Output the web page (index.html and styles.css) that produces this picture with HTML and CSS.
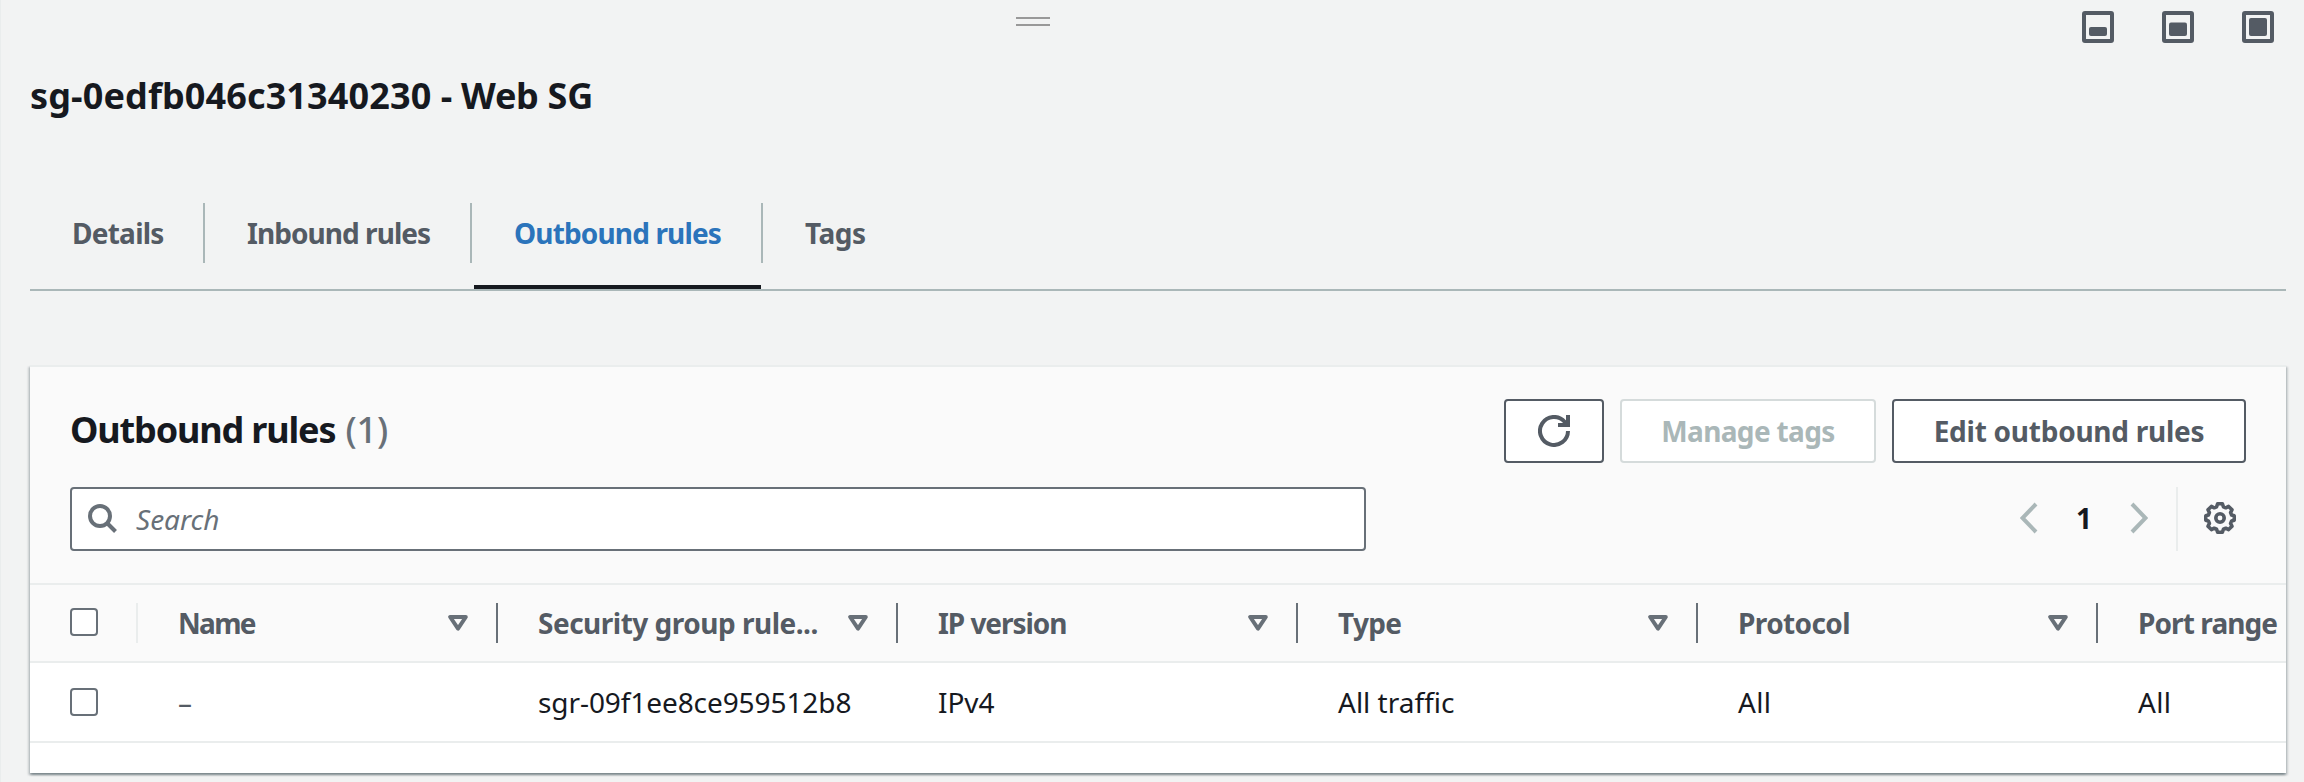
FILE: index.html
```html
<!DOCTYPE html>
<html lang="en">
<head>
<meta charset="utf-8">
<title>Security group</title>
<link rel="stylesheet" href="styles.css">
</head>
<body>
<div class="panel">
  <div class="topbar">
    <div class="handle"></div>
    <div class="sizes">
      <svg width="32" height="32" viewBox="0 0 32 32"><rect class="frame" x="2" y="2" width="28" height="28" rx="1"/><rect class="fill" x="7" y="16" width="18" height="9" rx="2"/></svg>
      <svg width="32" height="32" viewBox="0 0 32 32"><rect class="frame" x="2" y="2" width="28" height="28" rx="1"/><rect class="fill" x="7" y="11.5" width="18" height="13.5" rx="2"/></svg>
      <svg width="32" height="32" viewBox="0 0 32 32"><rect class="frame" x="2" y="2" width="28" height="28" rx="1"/><rect class="fill" x="7" y="7" width="18" height="18" rx="2"/></svg>
    </div>
  </div>
  <h1 class="title">sg-0edfb046c31340230 <span class="name">- Web SG</span></h1>
  <nav class="tabs">
    <a class="tab t-details"><span>Details</span></a>
    <a class="tab t-inbound"><span>Inbound rules</span></a>
    <a class="tab t-outbound active"><span>Outbound rules</span></a>
    <a class="tab t-tags"><span>Tags</span></a>
  </nav>
  <section class="card">
    <header class="card-head">
      <div class="row">
        <h2 class="card-title">Outbound rules <span class="count">(1)</span></h2>
        <div class="actions">
          <button class="btn refresh"><svg width="32" height="32" viewBox="0 0 32 32"><path d="M30 16A14 14 0 1 1 26.6 6.8L29.5 10M30 0V10H20"/></svg></button>
          <button class="btn manage" disabled>Manage tags</button>
          <button class="btn edit">Edit outbound rules</button>
        </div>
      </div>
      <div class="row">
        <div class="search">
          <svg width="32" height="32" viewBox="0 0 32 32"><circle cx="13" cy="13" r="10"/><path d="M20 20l8.5 8.5"/></svg>
          <span>Search</span>
        </div>
        <div class="pager">
          <svg class="chev" width="18" height="32" viewBox="0 0 18 32"><path d="M16 2L2.5 16 16 30"/></svg>
          <span class="page">1</span>
          <svg class="chev" width="18" height="32" viewBox="0 0 18 32"><path d="M2 2l13.5 14L2 30"/></svg>
          <i class="rule"></i>
          <svg class="gear" width="32" height="32" viewBox="0 0 32 32"><path d="M13.6 1.8h4.8l1 3 2.4 1 2.8-1.4 3.4 3.4-1.4 2.8 1 2.4 2.6.8v4.4l-2.6.8-1 2.4 1.4 2.8-3.4 3.4-2.8-1.4-2.4 1-1 3h-4.8l-1-3-2.4-1-2.8 1.4L4 24.2l1.4-2.8-1-2.4-2.6-.8v-4.4l2.6-.8 1-2.4L4 7.8l3.4-3.4 2.8 1.4 2.4-1z"/><circle cx="16" cy="16" r="4.2"/></svg>
        </div>
      </div>
    </header>
    <div class="grid head">
      <div class="cell check"><i class="box"></i></div>
      <div class="cell"><span class="n-name">Name</span><svg class="sort" width="20" height="16" viewBox="0 0 20 16"><path d="M2.2 2h15.6L10 13.6z"/></svg></div>
      <div class="cell"><span class="n-sgr">Security group rule...</span><svg class="sort" width="20" height="16" viewBox="0 0 20 16"><path d="M2.2 2h15.6L10 13.6z"/></svg></div>
      <div class="cell"><span class="n-ip">IP version</span><svg class="sort" width="20" height="16" viewBox="0 0 20 16"><path d="M2.2 2h15.6L10 13.6z"/></svg></div>
      <div class="cell"><span class="n-type">Type</span><svg class="sort" width="20" height="16" viewBox="0 0 20 16"><path d="M2.2 2h15.6L10 13.6z"/></svg></div>
      <div class="cell"><span class="n-proto">Protocol</span><svg class="sort" width="20" height="16" viewBox="0 0 20 16"><path d="M2.2 2h15.6L10 13.6z"/></svg></div>
      <div class="cell last"><span class="n-port">Port range</span></div>
    </div>
    <div class="grid body">
      <div class="cell check"><i class="box"></i></div>
      <div class="cell dash">–</div>
      <div class="cell id">sgr-09f1ee8ce959512b8</div>
      <div class="cell id">IPv4</div>
      <div class="cell">All traffic</div>
      <div class="cell all">All</div>
      <div class="cell all">All</div>
    </div>
  </section>
</div>
</body>
</html>
```
FILE: styles.css
```css
* { box-sizing: border-box; }
html, body { margin: 0; height: 782px; overflow: hidden; }
body { background: #f2f3f3; color: #16191f; font: 400 28px/40px "Noto Sans", "Open Sans", sans-serif; }
svg { display: block; fill: none; flex: none; }
.panel { height: 782px; border-left: 1px solid #eaeded; padding: 0 18px 0 29px; }

.topbar { height: 44px; padding-top: 11px; display: grid; grid-template-columns: 986px 34px 1fr; }
.handle { grid-column: 2; margin-top: 6px; height: 9px; border: solid #999; border-width: 2px 0; }
.sizes { display: flex; justify-content: flex-end; gap: 48px; padding-right: 12px; }
.frame { stroke: #545b64; stroke-width: 4; }
.fill { fill: #545b64; }

.title { margin: 32px 0 0; height: 127px; font-size: 36px; line-height: 40px; letter-spacing: .12px; }
.name { letter-spacing: -.3px; }

.tabs { display: flex; height: 88px; border-bottom: 2px solid #aab7b8; }
.tab { position: relative; height: 60px; border-right: 2px solid #aab7b8; padding: 10px 0 0 42px; font-weight: 700; color: #545b64; white-space: nowrap; }
.t-details { width: 175px; letter-spacing: -.75px; }
.t-inbound { width: 267px; letter-spacing: -.95px; }
.t-outbound { width: 291px; letter-spacing: -.85px; }
.t-tags { border: 0; letter-spacing: -.5px; }
.active { color: #2b74bb; }
.active::after { content: ""; position: absolute; left: 2px; right: 0; top: 82px; height: 4px; background: #16191f; }

.card { margin-top: 74px; height: 408px; background: #fff; border-top: 2px solid #eaeded; box-shadow: 0 2px 2px rgba(0,28,36,.3), 2px 2px 2px rgba(0,28,36,.15), -2px 2px 2px rgba(0,28,36,.15); }
.card-head { height: 218px; padding: 32px 40px; background: #fafafa; border-bottom: 2px solid #eaeded; display: grid; grid-template-rows: 64px 64px; row-gap: 24px; }
.row { display: flex; justify-content: space-between; align-items: center; }
.card-title { margin: -2px 0 0; font-size: 36px; line-height: 44px; letter-spacing: -1.15px; white-space: nowrap; }
.count { margin-left: 2px; font-weight: 500; color: #687078; letter-spacing: -.2px; }
.actions { display: flex; gap: 16px; }
.btn { height: 64px; border: 2px solid #545b64; border-radius: 4px; background: #fff; color: #545b64; font: 700 28px/40px "Noto Sans", "Open Sans", sans-serif; padding: 0 0 1px; white-space: nowrap; }
.refresh { width: 100px; padding: 0 0 0 32px; }
.refresh svg { stroke: #545b64; stroke-width: 4; }
.manage { width: 256px; letter-spacing: -.65px; color: #aab7b8; border-color: #d5dbdb; }
.edit { width: 354px; letter-spacing: -.25px; }

.search { width: 1296px; height: 64px; display: flex; align-items: center; gap: 17px; padding-left: 15px; background: #fff; border: 2px solid #687078; border-radius: 4px; font-style: italic; color: #687078; }
.search svg { stroke: #687078; stroke-width: 4; }
.pager { display: flex; align-items: center; padding: 0 10px 2px 0; height: 64px; }
.chev { stroke: #aab7b8; stroke-width: 4; }
.page { width: 92px; text-align: center; font-weight: 700; }
.rule { width: 2px; height: 64px; background: #eaeded; margin: 0 26px 0 28px; transform: translateY(1px); }
.gear { stroke: #545b64; stroke-width: 3.6; stroke-linejoin: round; }

.grid { display: grid; grid-template-columns: 108px 360px repeat(4, 400px) 188px; border-bottom: 2px solid #eaeded; overflow: hidden; }
.cell { padding-left: 40px; display: flex; align-items: center; white-space: nowrap; }
.head { height: 78px; background: #fafafa; color: #545b64; font-weight: 700; align-items: center; }
.head .cell { height: 40px; justify-content: space-between; border-right: 2px solid #687078; padding-right: 28px; }
.head .check { border-color: #eaeded; }
.head .last { border: 0; padding: 0 0 0 40px; }
.sort { stroke: #687078; stroke-width: 4; stroke-linejoin: round; }
.box { width: 28px; height: 28px; border: 2px solid #687078; border-radius: 4px; background: #fff; flex: none; }
.head .box { transform: translateY(-1px); }
.body { height: 80px; }
.dash { color: #545b64; }
.id { letter-spacing: -.08px; }
.all { letter-spacing: .3px; }
.n-name { letter-spacing: -1.7px; }
.n-sgr { letter-spacing: -.5px; }
.n-ip { letter-spacing: -1.05px; }
.n-type { letter-spacing: -.7px; }
.n-proto { letter-spacing: -.6px; }
.n-port { letter-spacing: -.9px; }
```
